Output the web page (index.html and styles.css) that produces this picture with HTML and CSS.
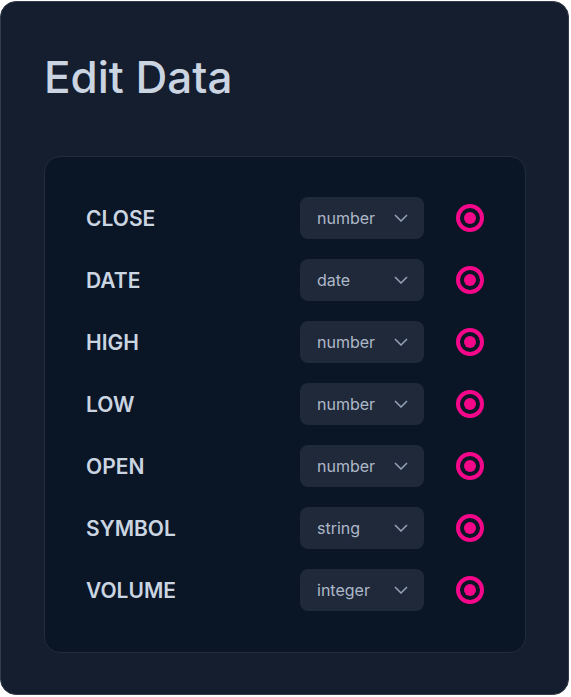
FILE: index.html
```html
<!DOCTYPE html>
<html lang="en">
<head>
  <meta charset="UTF-8">
  <meta name="viewport" content="width=device-width, initial-scale=1.0">
  <title>Edit Data</title>
  <link rel="stylesheet" href="styles.css">
</head>
<body>
  <div class="card">
    <h1 class="title">Edit Data</h1>
    <div class="panel">
      <div class="row">
        <span class="field">CLOSE</span>
        <div class="select"><span>number</span><svg class="chev" viewBox="0 0 14 8"><path d="M1 1l6 6 6-6"/></svg></div>
        <svg class="radio" viewBox="0 0 28 28"><circle cx="14" cy="14" r="12"/><circle class="dot" cx="14" cy="14" r="6"/></svg>
      </div>
      <div class="row">
        <span class="field">DATE</span>
        <div class="select"><span>date</span><svg class="chev" viewBox="0 0 14 8"><path d="M1 1l6 6 6-6"/></svg></div>
        <svg class="radio" viewBox="0 0 28 28"><circle cx="14" cy="14" r="12"/><circle class="dot" cx="14" cy="14" r="6"/></svg>
      </div>
      <div class="row">
        <span class="field">HIGH</span>
        <div class="select"><span>number</span><svg class="chev" viewBox="0 0 14 8"><path d="M1 1l6 6 6-6"/></svg></div>
        <svg class="radio" viewBox="0 0 28 28"><circle cx="14" cy="14" r="12"/><circle class="dot" cx="14" cy="14" r="6"/></svg>
      </div>
      <div class="row">
        <span class="field">LOW</span>
        <div class="select"><span>number</span><svg class="chev" viewBox="0 0 14 8"><path d="M1 1l6 6 6-6"/></svg></div>
        <svg class="radio" viewBox="0 0 28 28"><circle cx="14" cy="14" r="12"/><circle class="dot" cx="14" cy="14" r="6"/></svg>
      </div>
      <div class="row">
        <span class="field">OPEN</span>
        <div class="select"><span>number</span><svg class="chev" viewBox="0 0 14 8"><path d="M1 1l6 6 6-6"/></svg></div>
        <svg class="radio" viewBox="0 0 28 28"><circle cx="14" cy="14" r="12"/><circle class="dot" cx="14" cy="14" r="6"/></svg>
      </div>
      <div class="row">
        <span class="field">SYMBOL</span>
        <div class="select"><span>string</span><svg class="chev" viewBox="0 0 14 8"><path d="M1 1l6 6 6-6"/></svg></div>
        <svg class="radio" viewBox="0 0 28 28"><circle cx="14" cy="14" r="12"/><circle class="dot" cx="14" cy="14" r="6"/></svg>
      </div>
      <div class="row">
        <span class="field">VOLUME</span>
        <div class="select"><span>integer</span><svg class="chev" viewBox="0 0 14 8"><path d="M1 1l6 6 6-6"/></svg></div>
        <svg class="radio" viewBox="0 0 28 28"><circle cx="14" cy="14" r="12"/><circle class="dot" cx="14" cy="14" r="6"/></svg>
      </div>
    </div>
  </div>
</body>
</html>
```

FILE: styles.css
```css
body {
  margin: 0;
  padding: 1px 2px 2px 0;
  background-color: #ffffff;
  font-family: Inter, "Noto Sans", sans-serif;
}
.card {
  box-sizing: border-box;
  width: 569px;
  height: 694px;
  background-color: #141e2e;
  border: 1px solid #323b4a;
  border-radius: 16px;
  padding: 0 43px 0 43px;
}
.title {
  margin: 0;
  padding-top: 49px;
  height: 154px;
  box-sizing: border-box;
  font-size: 44px;
  line-height: 52px;
  font-weight: 500;
  color: #cbd5e1;
}
.panel {
  box-sizing: border-box;
  width: 482px;
  height: 497px;
  background-color: #0a1526;
  border: 1px solid #222c3c;
  border-radius: 16px;
  padding: 40px 41px 0 41px;
}
.row {
  display: flex;
  align-items: center;
  height: 42px;
  margin-bottom: 20px;
}
.field {
  flex: 1;
  font-size: 21px;
  font-weight: 600;
  color: #cbd5e1;
}
.select {
  box-sizing: border-box;
  width: 124px;
  height: 42px;
  background-color: #1f293a;
  border-radius: 8px;
  display: flex;
  align-items: center;
  justify-content: space-between;
  padding: 0 16px 0 17px;
  font-size: 16px;
  color: #aeb8c8;
}
.chev {
  width: 14px;
  height: 8px;
  fill: none;
  stroke: #94a3b8;
  stroke-width: 1.5;
}
.radio {
  width: 28px;
  height: 28px;
  margin-left: 32px;
  fill: none;
  stroke: #f5078a;
  stroke-width: 4;
}
.radio .dot {
  fill: #f5078a;
  stroke: none;
}
```
